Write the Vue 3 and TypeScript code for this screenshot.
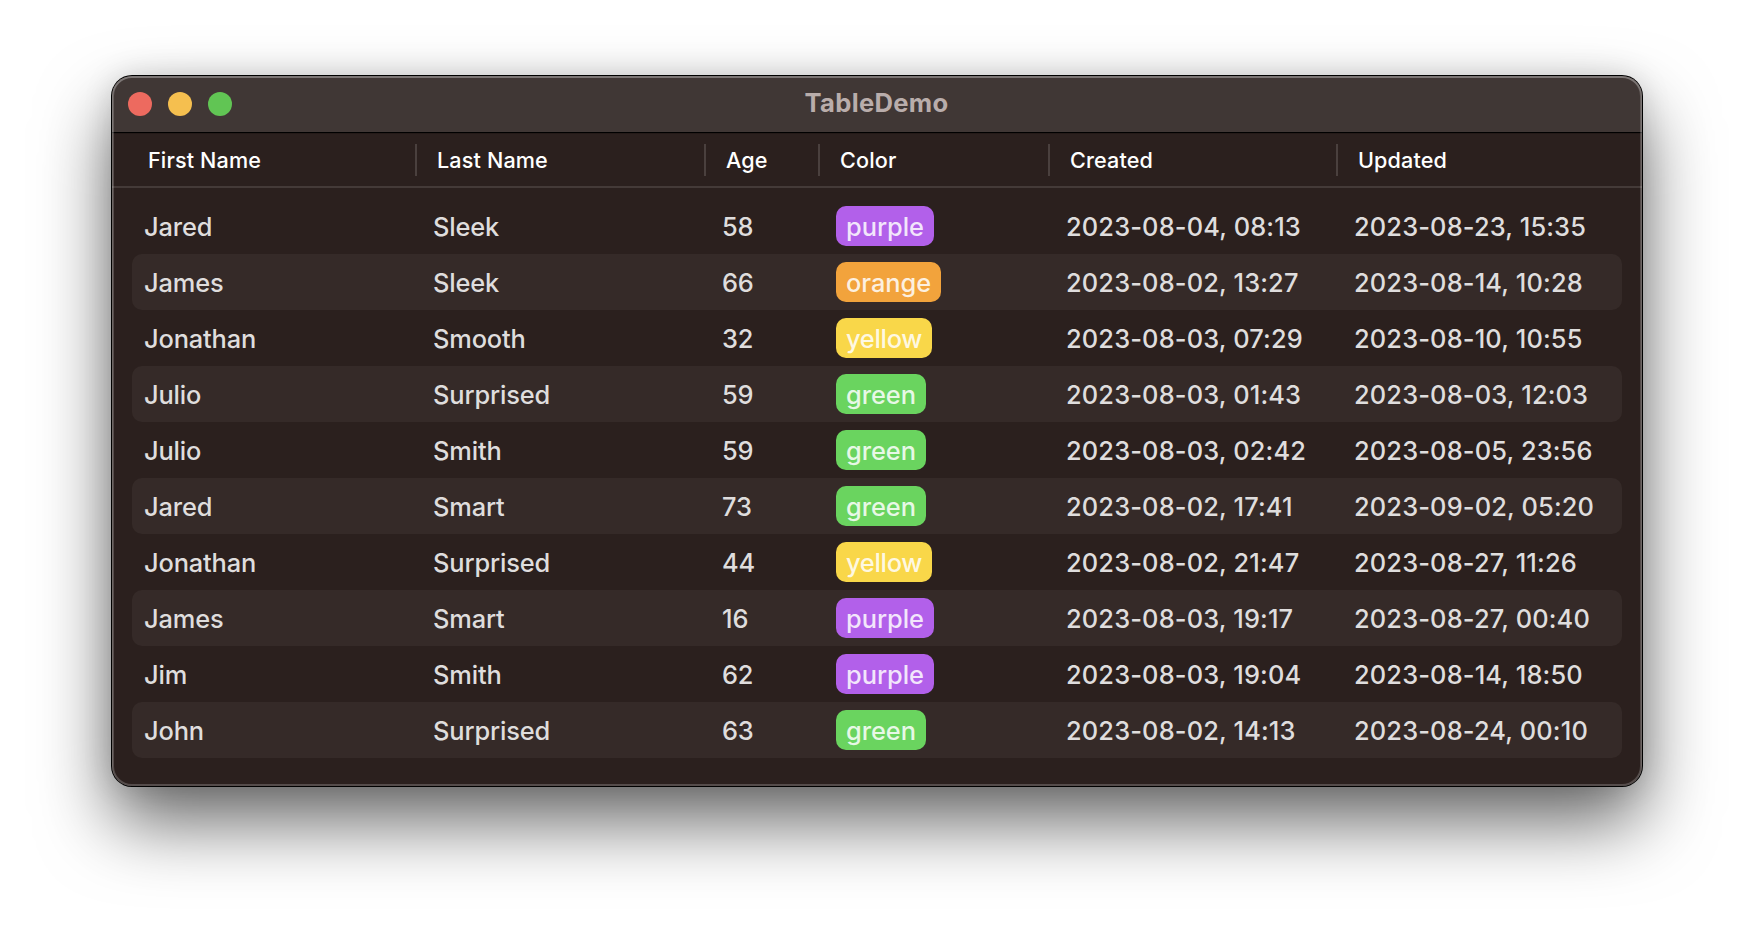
<script setup lang="ts">
type Tag = 'purple' | 'orange' | 'yellow' | 'green'

interface Person {
  first: string
  last: string
  age: number
  color: Tag
  created: string
  updated: string
}

const columns: string[] = ['First Name', 'Last Name', 'Age', 'Color', 'Created', 'Updated']

const people: Person[] = [
  { first: 'Jared', last: 'Sleek', age: 58, color: 'purple', created: '2023-08-04, 08:13', updated: '2023-08-23, 15:35' },
  { first: 'James', last: 'Sleek', age: 66, color: 'orange', created: '2023-08-02, 13:27', updated: '2023-08-14, 10:28' },
  { first: 'Jonathan', last: 'Smooth', age: 32, color: 'yellow', created: '2023-08-03, 07:29', updated: '2023-08-10, 10:55' },
  { first: 'Julio', last: 'Surprised', age: 59, color: 'green', created: '2023-08-03, 01:43', updated: '2023-08-03, 12:03' },
  { first: 'Julio', last: 'Smith', age: 59, color: 'green', created: '2023-08-03, 02:42', updated: '2023-08-05, 23:56' },
  { first: 'Jared', last: 'Smart', age: 73, color: 'green', created: '2023-08-02, 17:41', updated: '2023-09-02, 05:20' },
  { first: 'Jonathan', last: 'Surprised', age: 44, color: 'yellow', created: '2023-08-02, 21:47', updated: '2023-08-27, 11:26' },
  { first: 'James', last: 'Smart', age: 16, color: 'purple', created: '2023-08-03, 19:17', updated: '2023-08-27, 00:40' },
  { first: 'Jim', last: 'Smith', age: 62, color: 'purple', created: '2023-08-03, 19:04', updated: '2023-08-14, 18:50' },
  { first: 'John', last: 'Surprised', age: 63, color: 'green', created: '2023-08-02, 14:13', updated: '2023-08-24, 00:10' },
]
</script>

<template>
  <main class="desktop">
    <section class="window">
      <header class="titlebar">
        <div class="lights">
          <span class="light close"></span>
          <span class="light minimize"></span>
          <span class="light zoom"></span>
        </div>
        <h1 class="title">TableDemo</h1>
      </header>
      <div class="head">
        <div v-for="name in columns" :key="name" class="head-cell">{{ name }}</div>
      </div>
      <div class="body">
        <div v-for="(p, i) in people" :key="i" class="row">
          <span class="cell">{{ p.first }}</span>
          <span class="cell">{{ p.last }}</span>
          <span class="cell">{{ p.age }}</span>
          <span class="cell tag"><span class="badge" :class="p.color">{{ p.color }}</span></span>
          <span class="cell date">{{ p.created }}</span>
          <span class="cell date">{{ p.updated }}</span>
        </div>
      </div>
    </section>
  </main>
</template>

<style>
body {
  background: #fff;
  overflow: hidden;
}
</style>

<style scoped>
.desktop {
  box-sizing: border-box;
  width: 1754px;
  height: 934px;
  padding: 76px 112px 148px;
  font-family: Inter, 'Liberation Sans', sans-serif;
}

.window {
  position: relative;
  width: 1530px;
  height: 710px;
  border-radius: 20px;
  background: #2b201e;
  box-shadow:
    0 0 0 1px #000,
    0 36px 72px 0 rgba(0, 0, 0, 0.6),
    0 0 30px rgba(0, 0, 0, 0.13);
}

/* Inner highlight rim drawn above the bars and rows */
.window::after {
  content: '';
  position: absolute;
  inset: 0;
  border-radius: 20px;
  box-shadow:
    inset 0 0 0 2px rgba(255, 255, 255, 0.2),
    inset 0 1px 0 1px rgba(255, 255, 255, 0.15);
  pointer-events: none;
}

.titlebar {
  box-sizing: border-box;
  display: grid;
  grid-template-columns: 1fr auto 1fr;
  align-items: center;
  height: 58px;
  padding: 0 16px 2px;
  border-radius: 20px 20px 0 0;
  background: #403735;
  box-shadow: inset 0 -1px 0 #241a18, inset 0 -2px 0 #000;
}

.lights {
  display: flex;
  gap: 16px;
}

.light {
  width: 24px;
  height: 24px;
  border-radius: 50%;
}

.close { background: #ed6a5f; }
.minimize { background: #f5bf4f; }
.zoom { background: #61c554; }

.title {
  margin: 0;
  padding: 0 1px 3px 0;
  color: #b9adab;
  font-size: 25.6px;
  font-weight: 700;
  line-height: 30px;
  letter-spacing: 0.3px;
}

.head,
.row {
  display: grid;
}

.head {
  box-sizing: border-box;
  grid-template-columns: 305px 289px 114px 230px 288px 304px;
  align-items: center;
  height: 54px;
  border-bottom: 2px solid #443a38;
}

.head-cell {
  box-sizing: border-box;
  height: 32px;
  padding-left: 20px;
  border-right: 2px solid #4a403e;
  color: #fff;
  font-size: 21.6px;
  font-weight: 500;
  line-height: 32px;
  letter-spacing: 0.14px;
  white-space: nowrap;
}

.head-cell:first-child { padding-left: 36px; }
.head-cell:last-child { border-right: 0; }

.body {
  padding: 10px 20px 0;
}

.row {
  grid-template-columns: 289px 289px 114px 230px 288px 1fr;
  align-items: center;
  height: 56px;
  padding-left: 12px;
  border-radius: 10px;
}

.row:nth-child(even) { background: #352a28; }

.cell {
  padding-top: 2px;
  color: #dfdddd;
  font-size: 25.4px;
  font-weight: 450;
  line-height: 42px;
  letter-spacing: -0.14px;
  white-space: nowrap;
}

.date { letter-spacing: 0.15px; }

.tag {
  padding-top: 0;
  letter-spacing: -0.04px;
}

.badge {
  box-sizing: border-box;
  display: block;
  width: max-content;
  height: 40px;
  margin: 1px 0;
  padding: 0 10px;
  border-radius: 10px;
  color: rgba(255, 255, 255, 0.85);
}

.purple { background: #b260ea; }
.orange { background: #f2a33c; }
.yellow { background: #f9d749; letter-spacing: -0.3px; }
.green { background: #6ad45f; }
</style>
